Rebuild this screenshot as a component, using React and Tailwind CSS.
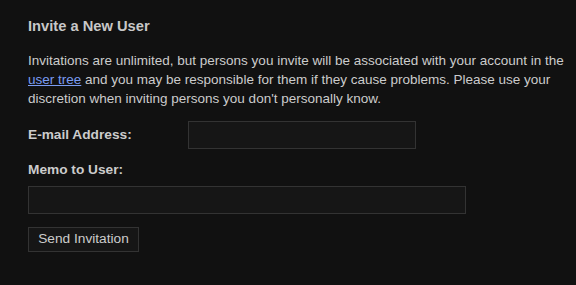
import React, { useState } from "react";

export default function App() {
  const [email, setEmail] = useState("");
  const [memo, setMemo] = useState("");

  return (
    <div className="min-h-[285px] w-full bg-[#111111] font-['Liberation_Sans',Arial,sans-serif] text-[#cccccc]">
      <div className="w-[576px] pl-[28px] pr-[2px] pt-[16px]">
        <h2 className="text-[14.7px] font-bold leading-[20px] text-[#c8c8c8]">Invite a New User</h2>

        <p className="mt-[15px] text-[13.5px] leading-[19px]">
          Invitations are unlimited, but persons you invite will be associated with your account in the{" "}
          <a href="#" className="text-[#7b9cf2] underline">user tree</a> and you may be responsible for them if
          they cause problems. Please use your discretion when inviting persons you don't personally know.
        </p>

        <form onSubmit={(e) => e.preventDefault()}>
          <div className="mt-[13px] flex items-center">
            <label htmlFor="email" className="w-[160px] text-[13.7px] font-bold">
              E-mail Address:
            </label>
            <input
              id="email"
              value={email}
              onChange={(e) => setEmail(e.target.value)}
              type="text"
              className="h-[28px] w-[228px] border border-[#333333] bg-[#161616] px-1 text-[13px] text-[#cccccc] outline-none"
            />
          </div>

          <label htmlFor="memo" className="mt-[11px] block text-[13.7px] font-bold leading-[19px]">
            Memo to User:
          </label>
          <input
            id="memo"
            value={memo}
            onChange={(e) => setMemo(e.target.value)}
            type="text"
            className="mt-[7px] block h-[28px] w-[438px] border border-[#333333] bg-[#161616] px-1 text-[13px] text-[#cccccc] outline-none"
          />

          <button
            type="submit"
            className="mt-[13px] h-[25px] w-[111px] border border-[#333333] bg-[#161616] text-[13.7px] text-[#cccccc]"
          >
            Send Invitation
          </button>
        </form>
      </div>
    </div>
  );
}
